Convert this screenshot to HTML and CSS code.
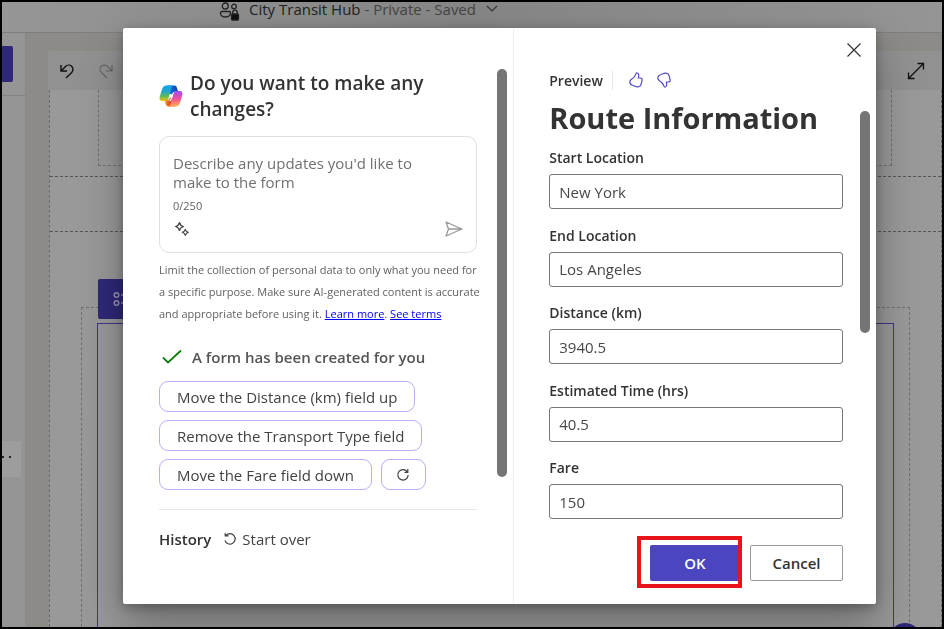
FILE: index.html
```html
<!DOCTYPE html>
<html lang="en">
<head>
<meta charset="utf-8">
<meta name="viewport" content="width=device-width, initial-scale=1">
<title>City Transit Hub</title>
<link rel="stylesheet" href="styles.css">
</head>
<body>
<div class="app">
  <header class="topbar">
    <svg class="people" viewBox="0 0 22 20" width="22" height="20" fill="none" stroke="#222" stroke-width="1.3">
      <circle cx="6.3" cy="5" r="3"/><circle cx="15" cy="5.500" r="2.300"/>
      <path d="M3 10.500h7.500a1 1 0 0 1 1 1c0 3-2 4.500-5 4.500s-5-1.500-5-4a1.500 1.500 0 0 1 1.500-1.500z"/>
      <path d="M13.700 13v-1.500a2.300 2.300 0 0 1 4.600 0V13"/>
      <rect x="12.500" y="13" width="7" height="6" rx="1" fill="#111"/>
    </svg>
    <span class="app-name">City Transit Hub <span class="app-status">- Private - Saved</span></span>
    <svg class="chevron" viewBox="0 0 12 8" width="12" height="8" fill="none" stroke="#333" stroke-width="1.2"><path d="M1 1l5 5 5-5"/></svg>
  </header>
  <div class="workspace">
    <aside class="sidebar">
      <div class="sidebar-head"><span class="new-screen"></span></div>
      <div class="tree-item"><i></i><i></i></div>
    </aside>
    <main class="studio">
      <div class="toolbar">
        <svg viewBox="0 0 16 16" width="16" height="16" fill="none" stroke="#111" stroke-width="1.4"><path d="M2 2v6h6M2.300 7.700L6.500 3.400a4.300 4.300 0 0 1 6.200 6L7 15"/></svg>
        <svg viewBox="0 0 16 16" width="16" height="16" fill="none" stroke="#666" stroke-width="1.2"><path d="M14 2v6H8M13.700 7.700L9.500 3.400a4.300 4.300 0 0 0-6.200 6L9 15"/></svg>
        <svg class="expand" viewBox="0 0 18 18" width="18" height="18" fill="none" stroke="#111" stroke-width="1.3"><path d="M10.500 1.500h6v6M16.500 1.500l-15 15M1.500 10.500v6h6"/></svg>
      </div>
      <div class="page">
        <div class="band band-top"><div class="slot"></div></div>
        <div class="band band-mid"></div>
        <div class="band-main">
          <div class="form-tab">
            <svg viewBox="0 0 16 16" width="16" height="16" fill="none" stroke="#9a97b5" stroke-width="1.4"><circle cx="3.500" cy="4" r="2.300"/><circle cx="3.500" cy="12" r="2.300"/><path d="M8 4h7M8 12h7"/></svg>
          </div>
          <div class="form-outer"><div class="form-inner"></div></div>
          <span class="help-dot"></span>
        </div>
      </div>
    </main>
  </div>
</div>

<div class="overlay">
  <section class="dialog" role="dialog" aria-label="Form preview">
    <div class="assist">
      <div class="assist-body">
        <div class="assist-head">
          <svg class="logo" viewBox="0 0 24 24" width="24" height="24">
            <defs>
              <linearGradient id="ga" x1="0" y1="0" x2="0" y2="1"><stop offset="0" stop-color="#12a5ee"/><stop offset=".4" stop-color="#1fa7c9"/><stop offset=".7" stop-color="#62bb54"/><stop offset="1" stop-color="#f4c20d"/></linearGradient>
              <linearGradient id="gb" x1="0" y1="0" x2="0" y2="1"><stop offset="0" stop-color="#a04ff0"/><stop offset=".5" stop-color="#ef4e9a"/><stop offset="1" stop-color="#ffb24a"/></linearGradient>
              <linearGradient id="gc" x1="0" y1="0" x2="1" y2="0"><stop offset="0" stop-color="#1684e0"/><stop offset="1" stop-color="#1738b8"/></linearGradient>
              <linearGradient id="gd" x1="0" y1="0" x2="1" y2="0"><stop offset="0" stop-color="#f5a623"/><stop offset=".5" stop-color="#e8472b"/><stop offset="1" stop-color="#ff7a55"/></linearGradient>
            </defs>
            <path fill="url(#gc)" d="M8 1.500h7.500c1.500 0 2.100 1 2.500 2.500L19.200 8h-2.700c-2 0-2.800 1-3.300 2.600L11 10z"/>
            <path fill="url(#gd)" d="M16 22.500H9.500C7.700 22.500 7 21.500 6.600 20L5.500 16h2.300c2 0 2.700-1 3.200-2.600L13 14z"/>
            <path fill="url(#ga)" d="M12.500 1.500h-5C4.800 1.500 3.600 3.500 2.800 6L.8 12.500C.1 15 .8 17 3.500 17h3c2 0 2.700-1.200 3.200-3L12 5c.4-1.500 1-2.800 2-3.500z"/>
            <path fill="url(#gb)" d="M11.500 22.500h5c2.700 0 3.900-2 4.700-4.500l2-6.500c.7-2.500 0-4.500-2.700-4.500h-3c-2 0-2.700 1.200-3.200 3L12 19c-.4 1.500-1 2.800-2 3.500z"/>
            <path fill="#fff" d="M16.500 7.500c-2.200 0-3 1.500-3.500 3.200l-.8 2.700c-.6 2-1.700 3.300-3.700 3.300 1.500.2 2.300-.2 3 .3.600-.3.800-.8 1-1.500l1.500-5c.5-1.600 1-2.700 2.500-3z"/>
          </svg>
          <h2>Do you want to make any changes?</h2>
        </div>
        <div class="prompt">
          <textarea rows="2" aria-label="Form updates" placeholder="Describe any updates you'd like to make to the form"></textarea>
          <span class="count">0/250</span>
          <div class="prompt-actions">
            <button type="button" class="bare" aria-label="Ideas"><svg viewBox="0 0 18 18" width="18" height="18" fill="none" stroke="#424242" stroke-width="1.200" stroke-linejoin="round"><path d="M6.500 2.500Q7.300 5.800 10.500 6.500Q7.300 7.300 6.500 10.500Q5.700 7.300 2.500 6.500Q5.700 5.800 6.500 2.500zM12.300 9.300Q13 11.600 15.300 12.300Q13 13 12.300 15.300Q11.600 13 9.300 12.300Q11.600 11.600 12.300 9.300z"/></svg></button>
            <button type="button" class="bare" aria-label="Send"><svg viewBox="0 0 18 16" width="18" height="16" fill="none" stroke="#999" stroke-width="1.300" stroke-linejoin="round"><path d="M1 1l16 7L1 15l2.500-7zM3.500 8H17"/></svg></button>
          </div>
        </div>
        <p class="legal">Limit the collection of personal data to only what you need for a specific purpose. Make sure AI-generated content is accurate and appropriate before using it. <a href="#">Learn more</a>. <a href="#">See terms</a></p>
        <p class="done"><svg viewBox="0 0 20 16" width="20" height="16" fill="none" stroke="#107c10" stroke-width="1.800"><path d="M1 8.500l5 5L19 1.500"/></svg>A form has been created for you</p>
        <div class="chips">
          <button type="button" class="chip">Move the Distance (km) field up</button>
          <button type="button" class="chip">Remove the Transport Type field</button>
          <button type="button" class="chip">Move the Fare field down</button>
          <button type="button" class="chip chip-icon" aria-label="Refresh"><svg viewBox="0 0 14 14" width="14" height="14" fill="none" stroke="#424242" stroke-width="1.200"><path d="M11.500 4.200A5.200 5.200 0 1 0 12.200 7M8.500 4.300h3.300V1"/></svg></button>
        </div>
        <div class="history">
          <h3>History</h3>
          <button type="button" class="bare start"><svg viewBox="0 0 14 14" width="14" height="14" fill="none" stroke="#424242" stroke-width="1.200"><path d="M3 3.500A5.200 5.200 0 1 1 2 8.500M5.500 3.800H2.200V1"/></svg>Start over</button>
        </div>
      </div>
      <div class="thumb thumb-left"></div>
    </div>

    <div class="preview">
      <button type="button" class="bare close" aria-label="Close"><svg viewBox="0 0 14 14" width="14" height="14" stroke="#333" stroke-width="1.200"><path d="M0.500 0.500l13 13M13.500 0.500l-13 13"/></svg></button>
      <div class="preview-body">
        <div class="preview-head">
          <span>Preview</span>
          <button type="button" class="bare" aria-label="Like"><svg viewBox="0 0 14 16" width="14" height="16" fill="none" stroke="#5048c8" stroke-width="1.200" stroke-linejoin="round"><path d="M8.300 1C7.300.8 6.900 1.500 6.700 2.300 6 5 4.500 6 2.200 7.500.8 8.400.6 9.600 1 11c.3 1.300 1.200 1.900 2.500 2.300l3.800 1.400c2.400.7 4.200-.2 4.800-2.500l1-4c.3-1.300-.4-2.200-1.700-2.200H9.300C9.900 4 10.200 1.500 8.300 1z"/></svg></button>
          <button type="button" class="bare" aria-label="Dislike"><svg viewBox="0 0 14 16" width="14" height="16" fill="none" stroke="#5048c8" stroke-width="1.200" stroke-linejoin="round"><path d="M8.300 15c-1 .2-1.400-.5-1.600-1.300C6 11 4.500 10 2.200 8.500.8 7.600.6 6.400 1 5c.3-1.300 1.200-1.900 2.500-2.300l3.800-1.400c2.400-.7 4.200.2 4.800 2.500l1 4c.3 1.300-.4 2.200-1.700 2.200H9.300c.6 2 .9 4.500-1 5z"/></svg></button>
        </div>
        <h1>Route Information</h1>
        <form class="fields">
          <div class="field"><label for="start">Start Location</label><input id="start" type="text" value="New York"></div>
          <div class="field"><label for="end">End Location</label><input id="end" type="text" value="Los Angeles"></div>
          <div class="field"><label for="dist">Distance (km)</label><input id="dist" type="text" value="3940.5"></div>
          <div class="field"><label for="time">Estimated Time (hrs)</label><input id="time" type="text" value="40.5"></div>
          <div class="field"><label for="fare">Fare</label><input id="fare" type="text" value="150"></div>
        </form>
        <div class="actions">
          <span class="callout"><button type="button" class="btn btn-primary">OK</button></span>
          <button type="button" class="btn">Cancel</button>
        </div>
      </div>
      <div class="thumb thumb-right"></div>
    </div>
  </section>
</div>
</body>
</html>
```
FILE: styles.css
```css
* { box-sizing: border-box; }
body { margin: 0; overflow: hidden; font-family: "Open Sans", "Noto Sans", sans-serif; font-size: 15px; color: #333; }
button, input, textarea { font: inherit; color: inherit; }
h1, h2, h3, p { margin: 0; }
svg { display: block; flex: none; }

/* Studio behind the dialog */
.app { height: 100vh; display: flex; flex-direction: column; border: 2px solid #000; background: #8d8b88; overflow: hidden; }
.topbar { flex: none; height: 31px; display: flex; align-items: flex-start; padding-left: 217px; background: linear-gradient(90deg, #969696, #868686 50%, #959595); border-bottom: 1px solid #7e7e7e; }
.people { margin-top: -1px; }
.app-name { margin: -4px 10px 0 8px; line-height: 22px; color: #222; white-space: nowrap; }
.app-status { color: #444; }
.chevron { margin-top: 3px; }
.workspace { flex: 1; display: flex; min-height: 0; }
.sidebar { flex: none; width: 24px; background: #959595; border-right: 1px solid #888; }
.sidebar-head { height: 63px; padding-top: 13px; border-bottom: 1px solid #828282; }
.new-screen { display: block; width: 11px; height: 36px; border-radius: 0 2px 2px 0; background: #2f2879; }
.tree-item { display: flex; align-items: center; gap: 5px; width: 19px; height: 36px; margin-top: 345px; padding-bottom: 4px; background: #9d9d9d; }
.tree-item i { width: 2px; height: 2px; background: #222; }
.studio { flex: 1; display: flex; flex-direction: column; min-width: 0; padding: 18px 0 0 22px; }
.toolbar { flex: none; height: 39px; display: flex; align-items: center; gap: 23px; padding: 0 17px 0 11px; border-radius: 4px 0 0 0; background: #919191; }
.expand { margin-left: auto; }
.page { flex: 1; display: flex; flex-direction: column; min-height: 0; margin-left: 1px; background: #999; border: 1px dashed #6a6a6a; border-width: 0 1px; }
.band { border-bottom: 1px dashed #555; }
.band-top { height: 87px; padding: 0 49px 10px 48px; }
.slot { height: 100%; border: 1px dashed #707070; border-top: 0; }
.band-mid { height: 55px; }
.band-main { position: relative; flex: 1; display: flex; padding: 75px 31px 0; }
.form-outer { flex: 1; padding: 15px 15px 0; border: 1px dashed #707070; border-bottom: 0; }
.form-inner { height: 100%; border: 1px solid #3d3788; border-bottom: 0; }
.form-tab { position: absolute; left: 48px; top: 47px; height: 40px; width: 60px; display: flex; align-items: center; padding-left: 15px; border-radius: 2px; background: #2f2879; }
.help-dot { position: absolute; right: 20px; bottom: -28px; width: 32px; height: 32px; border-radius: 50%; background: #2f2879; }

/* Dialog */
.overlay { position: fixed; inset: 0; display: flex; padding: 28px 68px 25px 123px; }
.dialog { flex: 1; display: flex; background: #fff; border-radius: 2px; box-shadow: 0 20px 44px rgba(0,0,0,.3), 0 3px 12px rgba(0,0,0,.28); }
.assist { flex: 392; display: flex; min-width: 0; padding: 41px 6px 0 36px; border-right: 1px solid #eee; }
.assist-body { flex: 1; min-width: 0; margin-right: 20px; }
.thumb { flex: none; width: 10px; border-radius: 5px; background: #757575; }
.thumb-left { height: 408px; }
.assist-head { display: flex; align-items: center; gap: 7px; margin-top: 1px; }
.assist-head h2 { font-size: 19px; line-height: 26px; font-weight: 600; padding-right: 40px; }
.prompt { margin-top: 14px; padding: 17px 13px 14px; border: 1px solid #e0e0e0; border-radius: 10px; }
.prompt textarea { display: block; width: 100%; height: 38px; padding: 0 40px 0 0; border: 0; outline: 0; resize: none; overflow: hidden; background: none; line-height: 19px; }
.prompt textarea::placeholder { color: #707070; opacity: 1; }
.count { display: block; margin-top: 6px; font-size: 11px; line-height: 16px; color: #616161; }
.prompt-actions { display: flex; justify-content: space-between; align-items: center; margin-top: 6px; }
.bare { display: inline-flex; align-items: center; padding: 0; border: 0; background: none; }
.legal { margin: 6px -8px 0 0; font-size: 11px; line-height: 22px; color: #616161; }
.legal a { color: #00f; }
.done { display: flex; align-items: center; gap: 10px; margin-top: 21px; padding-left: 3px; line-height: 22px; font-weight: 600; color: #555; }
.chips { display: flex; flex-wrap: wrap; gap: 8px 9px; margin-top: 13px; padding-right: 40px; }
.chip { height: 31px; padding: 0 17px; border: 1px solid #b9aefa; border-radius: 9px; background: #fff; color: #424242; line-height: 20px; }
.chip-icon { width: 45px; display: inline-flex; align-items: center; justify-content: center; padding: 0; }
.history { display: flex; align-items: center; gap: 12px; margin-top: 19px; padding-top: 18px; border-top: 1px solid #e6e6e6; }
.history h3 { font-size: 15px; line-height: 22px; font-weight: 600; }
.start { gap: 5px; color: #424242; line-height: 22px; }

.preview { position: relative; flex: 361; display: flex; min-width: 0; padding: 41px 6px 23px 35px; }
.preview-body { flex: 1; display: flex; flex-direction: column; min-width: 0; margin-right: 17px; }
.close { position: absolute; right: 15px; top: 15px; }
.thumb-right { height: 222px; margin-top: 42px; }
.preview-head { display: flex; align-items: center; gap: 14px; height: 22px; font-weight: 600; font-size: 14px; }
.preview-head span { padding-right: 9px; border-right: 1px solid #e6e6e6; }
.preview-head span + .bare { margin-left: 2px; }
.preview h1 { margin-top: 7px; font-size: 29px; line-height: 40px; font-weight: 700; white-space: nowrap; }
.fields { flex: 1; display: flex; flex-direction: column; justify-content: space-between; margin: 10px 0 26px; }
.field label { display: block; margin-bottom: 6px; font-size: 14px; line-height: 20px; font-weight: 600; }
.field input { display: block; width: 100%; height: 35px; padding: 0 9px; border: 1px solid #767676; border-radius: 3px; outline: 0; background: #fff; color: #484848; }
.actions { display: flex; justify-content: flex-end; gap: 10px; }
.btn { height: 36px; width: 93px; padding: 0; border: 1px solid #999; border-radius: 2px; background: #fff; font-weight: 600; }
.btn-primary { width: 90px; border: 0; background: #4b45c0; color: #fff; }
.callout { position: relative; display: flex; }
.callout::after { content: ""; position: absolute; inset: -9px -2px -7px -13px; border: 4px solid #e8141b; }
```
